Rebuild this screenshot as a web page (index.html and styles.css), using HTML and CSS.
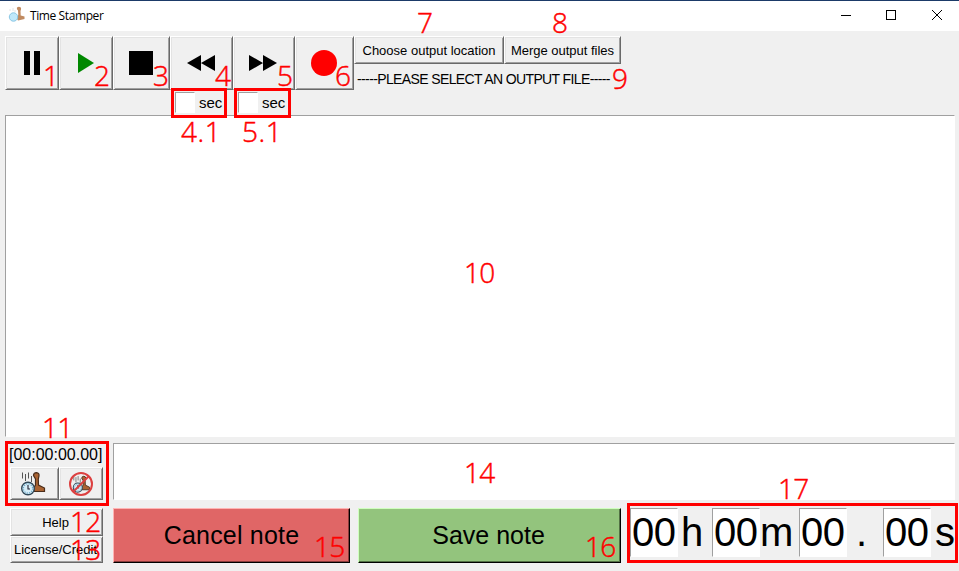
FILE: index.html
```html
<!DOCTYPE html>
<html lang="en">
<head>
<meta charset="utf-8">
<title>Time Stamper</title>
<link rel="stylesheet" href="styles.css">
</head>
<body>
<div class="window">
  <header class="titlebar">
    <svg class="app-icon" width="18" height="18" viewBox="0 0 18 18">
      <path d="M9 1.5Q11-.2 12.800 1.500Q13.500 3 12.500 5L12.700 9.500L16.500 10.500V13L10 14.500L8.500 12L10.300 9L10 4.500Q8.500 3 9 1.500Z" fill="#c08a60"/>
      <circle cx="5.500" cy="11" r="4.200" fill="#bfe8fa" stroke="#8ac7e4"/>
      <path d="M2 3v2M5 2v3M7 4v2" stroke="#e4e4e4"/>
    </svg>
    <h1>Time Stamper</h1>
    <svg class="controls" width="104" height="12" viewBox="0 0 104 12" fill="none" stroke="#000">
      <path d="M0 6.500H10"/><rect x="45.500" y="1.500" width="9" height="9"/><path d="M91 1L101 11M101 1L91 11"/>
    </svg>
  </header>
  <main>
    <section class="toolbar">
      <button class="btn pause"><svg width="16" height="24"><path d="M0 0h6v24H0zM10 0h6v24h-6z"/></svg></button>
      <button class="btn play"><svg width="16" height="20"><path d="M0 0L16 10L0 20z" fill="#080"/></svg></button>
      <button class="btn stop"><svg width="24" height="24"><path d="M0 0h24v24H0z"/></svg></button>
      <div class="seek back">
        <button class="btn"><svg width="28" height="16"><path d="M14 0L0 8L14 16zM28 0L14 8L28 16z"/></svg></button>
        <label><input class="field" aria-label="Rewind seconds">sec</label>
      </div>
      <div class="seek forward">
        <button class="btn"><svg width="28" height="16"><path d="M0 0L14 8L0 16zM14 0L28 8L14 16z"/></svg></button>
        <label><input class="field" aria-label="Forward seconds">sec</label>
      </div>
      <button class="btn record"><svg width="26" height="26"><circle cx="13" cy="13" r="13" fill="red"/></svg></button>
      <div class="output">
        <div class="output-buttons"><button class="btn choose">Choose output location</button><button class="btn merge">Merge output files</button></div>
        <p>-----PLEASE SELECT AN OUTPUT FILE-----</p>
      </div>
    </section>
    <textarea class="field log" aria-label="Notes log"></textarea>
    <section class="note-row">
      <div class="stamp">
        <div class="stamp-time">[00:00:00.00]</div>
        <div class="stamp-buttons">
          <button class="btn"><svg width="26" height="26" viewBox="0 0 26 26"><use href="#stamp"/></svg></button>
          <button class="btn"><svg width="26" height="26" viewBox="0 0 26 26"><g transform="translate(4 4) scale(.72)"><use href="#stamp"/></g><circle cx="13" cy="13" r="11" fill="none" stroke="#dc4040" stroke-width="2"/><path d="M5.500 20.500L20.500 5.500" stroke="#dc4040" stroke-width="2"/></svg></button>
        </div>
      </div>
      <textarea class="field note" aria-label="Note"></textarea>
    </section>
    <section class="bottom">
      <div class="links"><button class="btn help">Help</button><button class="btn license">License/Credit</button></div>
      <button class="btn cancel">Cancel note</button>
      <button class="btn save">Save note</button>
      <div class="timer">
        <input class="field" value="00" aria-label="Hours"><span class="hours">h</span>
        <input class="field" value="00" aria-label="Minutes"><span class="minutes">m</span>
        <input class="field" value="00" aria-label="Seconds"><span class="dot">.</span>
        <input class="field" value="00" aria-label="Hundredths"><span class="seconds">s</span>
      </div>
    </section>
  </main>
  <svg class="defs" width="0" height="0"><defs><g id="stamp">
    <path d="M13.500 4.500Q13.500 1.700 16.500 1.700Q19.500 2 19 5L18.300 8L18.500 14L24.500 17V20.500H14V16.500L15.500 14V8Z" fill="#a96332" stroke="#4a2d1b" stroke-width="1.200"/>
    <path d="M2.500 1.500v6M5.500 3v7M8.500 1.500v6M11.500 5v6" stroke="#555" stroke-width="1"/>
    <circle cx="8" cy="17.500" r="6.300" fill="#d7edf7" stroke="#304858" stroke-width="1.400"/>
    <circle cx="8" cy="17.500" r="4.600" fill="none" stroke="#6aa8ca" stroke-width="1.200" stroke-dasharray="1.200 1.200"/>
    <path d="M8 14v4h2" fill="none" stroke="#223" stroke-width="1.100"/>
  </g></defs></svg>
  <div class="marks">
    <i class="frame f41"></i><i class="frame f51"></i><i class="frame f11"></i><i class="frame f17"></i>
    <b class="m1">1</b><b class="m2">2</b><b class="m3">3</b><b class="m4">4</b><b class="m5">5</b><b class="m6">6</b><b class="m7">7</b><b class="m8">8</b><b class="m9">9</b>
    <b class="m41">4.1</b><b class="m51">5.1</b><b class="m10">10</b><b class="m11">11</b><b class="m12">12</b><b class="m13">13</b><b class="m14">14</b><b class="m15">15</b><b class="m16">16</b><b class="m17">17</b>
  </div>
</div>
</body>
</html>
```
FILE: styles.css
```css
* { box-sizing: border-box; }
body { margin: 0; overflow: hidden; background: #f0f0f0; color: #000; font: 13px "Liberation Sans", Arial, sans-serif; }
.window { position: relative; width: 959px; height: 571px; overflow: hidden; }
.titlebar { height: 31px; border-top: 1px solid #1b3a68; background: #fff; display: flex; align-items: center; padding: 0 14px 0 8px; }
.app-icon { margin: -2px 4px 0 0; }
h1 { margin: -1px 0 0; font: 12px "Open Sans", sans-serif; letter-spacing: -.4px; }
.controls { margin-left: auto; margin-top: -2px; }
main { padding: 5px 4px 0 5px; }
.btn { display: flex; align-items: center; justify-content: center; margin: 0; padding: 0; font: inherit; color: #000; background: #f0f0f0; border: 1px solid; border-color: #fff #696969 #696969 #fff; border-radius: 0; box-shadow: inset 1px 1px #e3e3e3, inset -1px -1px #a0a0a0; white-space: nowrap; flex: none; }
.btn svg { display: block; }
.field { display: block; margin: 0; padding: 0; border: 1px solid; border-color: #a0a0a0 #fff #fff #a0a0a0; border-radius: 0; background: #fff; resize: none; outline: 0; }
.toolbar { display: flex; align-items: flex-start; height: 79px; }
.toolbar > .btn, .seek .btn { height: 54px; }
.pause, .play { width: 54px; }
.stop { width: 57px; padding-right: 2px; }
.back { width: 63px; }
.forward { width: 62px; }
.seek .btn { width: 100%; padding-right: 2px; }
.seek label { display: flex; align-items: center; gap: 4px; padding: 2px 0 0 5px; font-size: 15px; line-height: 21px; }
.seek .field { width: 20px; height: 21px; }
.record { width: 59px; padding-right: 2px; }
.output-buttons { display: flex; }
.output-buttons .btn { height: 28px; }
.choose { width: 150px; letter-spacing: 0; }
.merge { width: 117px; letter-spacing: -.02px; }
.output p { margin: 7px 0 0 3px; line-height: 16px; font-size: 14px; letter-spacing: -.62px; white-space: nowrap; }
.log { width: 950px; height: 322px; }
.note-row { display: flex; justify-content: space-between; height: 71px; padding-top: 6px; }
.stamp { padding-left: 4px; width: 104px; }
.stamp-time { font-size: 16px; line-height: 24px; height: 24px; white-space: nowrap; }
.stamp-buttons { display: flex; padding-left: 1px; }
.stamp-buttons .btn { width: 49px; height: 33px; padding-right: 3px; }
.stamp-buttons .btn + .btn { width: 44px; padding-right: 1px; }
.note { width: 842px; height: 57px; }
.bottom { display: flex; align-items: flex-start; }
.links { width: 93px; margin: 0 10px 0 5px; }
.links .btn { width: 93px; height: 28px; padding-right: 2px; }
.links .license { height: 27px; }
.cancel, .save { height: 55px; font-size: 25px; letter-spacing: .2px; }
.cancel { width: 237px; margin-right: 8px; background: #e06666; border-color: #ffb3b3 #000 #000 #ffb3b3; box-shadow: inset -1px -1px #8a3c3c; }
.save { width: 263px; padding-right: 2px; letter-spacing: 0; background: #93c47d; border-color: #cfffbe #000 #000 #cfffbe; box-shadow: inset -1px -1px #527044; }
.timer { display: grid; grid-template-columns: 48px 34px 48px 39px 48px 36px 48px 24px; margin-left: 9px; height: 49px; font-size: 40px; line-height: 49px; }
.timer .field { width: 48px; height: 49px; font: 40px "Liberation Sans", Arial, sans-serif; letter-spacing: -.5px; padding-left: 1px; }
.hours { padding-left: 3px; }
.dot { padding-left: 9px; }
.seconds { padding-left: 4px; }
.defs { position: absolute; }
.marks { position: absolute; inset: 0; pointer-events: none; }
.frame { position: absolute; border: 3px solid red; }
.f41 { left: 171px; top: 88px; width: 56px; height: 30px; }
.f51 { left: 234px; top: 88px; width: 57px; height: 30px; }
.f11 { left: 5px; top: 441px; width: 104px; height: 65px; }
.f17 { left: 627px; top: 503px; width: 331px; height: 60px; }
.marks b { position: absolute; color: red; font: 300 28px/30px "Open Sans", sans-serif; letter-spacing: -.8px; -webkit-text-stroke: .45px red; }
.m1 { left: 43px; top: 60px; }
.m2 { left: 94px; top: 60px; }
.m3 { left: 153px; top: 60px; }
.m4 { left: 215px; top: 60px; }
.m5 { left: 277px; top: 60px; }
.m6 { left: 335px; top: 60px; }
.m7 { left: 417px; top: 7px; }
.m8 { left: 552px; top: 7px; }
.m9 { left: 612px; top: 63px; }
.marks .m41, .marks .m51 { letter-spacing: .5px; }
.m41 { left: 181px; top: 116px; }
.m51 { left: 242px; top: 116px; }
.m10 { left: 464px; top: 257px; }
.m11 { left: 42px; top: 412px; }
.m12 { left: 70px; top: 506px; }
.m13 { left: 70px; top: 534px; }
.m14 { left: 464px; top: 457px; }
.m15 { left: 314px; top: 531px; }
.m16 { left: 585px; top: 531px; }
.m17 { left: 778px; top: 473px; }
```
